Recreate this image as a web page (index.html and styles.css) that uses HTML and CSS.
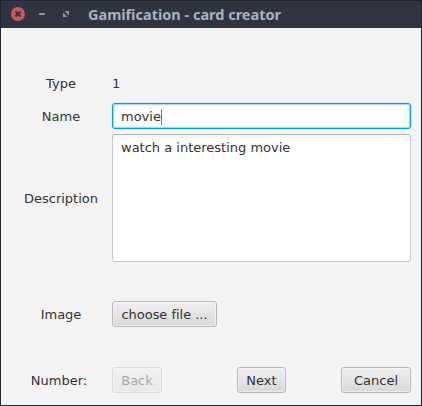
FILE: index.html
```html
<!DOCTYPE html>
<html lang="en">
<head>
<meta charset="utf-8">
<title>Gamification - card creator</title>
<link rel="stylesheet" href="styles.css">
</head>
<body>
<div class="window">
  <header class="titlebar">
    <svg class="controls" width="75" height="27" viewBox="0 0 75 27" aria-hidden="true">
      <circle cx="17" cy="13" r="7" fill="#cc575d"/>
      <path d="M14.5 10.5l5 5M19.5 10.5l-5 5" stroke="#2f343f" stroke-width="2" fill="none"/>
      <path d="M38 12h6v2h-6z" fill="#90949e"/>
      <path d="M63.5 10h4.5v4.5zM62 11.5v4.500h4.500z" fill="#90949e"/>
    </svg>
    <h1 class="title"><svg width="200" height="27" aria-hidden="true"><text x="0" y="19" textLength="193" lengthAdjust="spacingAndGlyphs">Gamification - card creator</text></svg></h1>
  </header>
  <main class="form">
    <label class="label type">Type</label>
    <span class="value">1</span>
    <label class="label">Name</label>
    <div class="input"><span class="typed">movie</span></div>
    <label class="label description">Description</label>
    <div class="textarea">watch a interesting movie</div>
    <label class="label">Image</label>
    <div class="cell"><button class="button choose">choose file ...</button></div>
    <label class="label number">Number:</label>
    <div class="actions">
      <button class="button back" disabled>Back</button>
      <button class="button next">Next</button>
      <button class="button cancel">Cancel</button>
    </div>
  </main>
</div>
</body>
</html>
```
FILE: styles.css
```css
* { box-sizing: border-box; }

body {
  margin: 0;
  background: #20222d;
  font: 13px/16px "DejaVu Sans", sans-serif;
  color: #333;
}

.window {
  width: 422px;
  height: 406px;
  padding: 1px;
  display: flex;
  flex-direction: column;
  background: #20222d;
}

.titlebar {
  height: 27px;
  display: flex;
  background: #2f343f;
  border-radius: 3px 3px 0 0;
  box-shadow: inset 0 1px #363b47;
}

.controls { flex: none; margin-right: 12px; }

.title { margin: 0; height: 27px; }
.title svg { display: block; }
.title text {
  font: bold 14.5px "Noto Sans", sans-serif;
  fill: #a9b2c0;
}

.form {
  flex: 1;
  display: grid;
  grid-template-columns: 75px 299px;
  grid-template-rows: 30px 26px 138px 94px 38px;
  column-gap: 13px;
  align-items: center;
  align-content: start;
  padding: 45px 10px 0 23px;
  background: #f4f4f4;
}

.label { text-align: center; padding: 1px 1px 0 0; }
.description { padding-right: 0; margin-left: -1px; }
.type, .value { align-self: start; padding-top: 3px; }
.number { padding-right: 5px; }

.input {
  height: 26px;
  padding: 5px 8px;
  border: 1px solid #039ed3;
  border-radius: 3px;
  background: #fff;
  box-shadow: 0 0 0 1px #dceef5, inset 0 0 0 1px #a5dcf0, inset 0 0 0 2px #e3f5fb;
}

.typed {
  display: inline-block;
  height: 16px;
  border-right: 1px solid #777;
}

.textarea {
  height: 128px;
  padding: 5px 8px;
  border: 1px solid #c8c8c8;
  border-top-color: #b5b5b5;
  border-radius: 3px;
  background: linear-gradient(#f3f3f3, #fff 5px);
}

.button {
  height: 26px;
  padding: 1px 0 0;
  border: 1px solid #b8b8b8;
  border-radius: 3px;
  background: linear-gradient(#efefef, #d9d9d9);
  box-shadow: inset 0 0 0 1px rgba(255, 255, 255, .45);
  font: inherit;
  color: #333;
}

.cell, .actions { display: flex; }
.choose { width: 105px; letter-spacing: -.03px; }
.back { width: 50px; margin-right: 75px; }
.back:disabled { opacity: .4; }
.next { width: 49px; }
.cancel { width: 70px; margin-left: auto; }
```
